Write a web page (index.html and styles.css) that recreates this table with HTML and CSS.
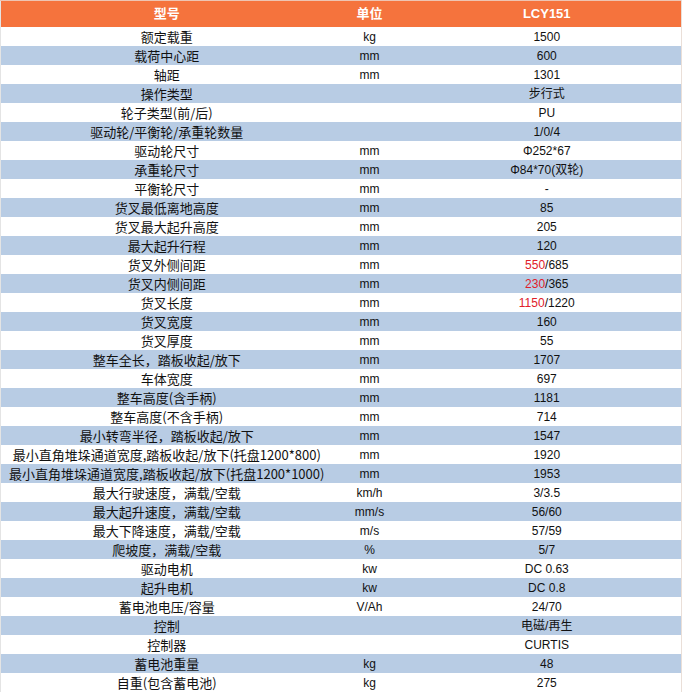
FILE: index.html
```html
<!DOCTYPE html>
<html lang="zh">
<head>
<meta charset="utf-8">
<title>LCY151</title>
<link rel="stylesheet" href="styles.css">
</head>
<body>
<table class="spec">
<colgroup><col class="c-name"><col class="c-unit"><col class="c-val"></colgroup>
<thead>
<tr class="head"><th class="name">型号</th><th class="unit">单位</th><th class="val">LCY151</th></tr>
</thead>
<tbody>
<tr><td class="name">额定载重</td><td class="unit">kg</td><td class="val">1500</td></tr>
<tr><td class="name">载荷中心距</td><td class="unit">mm</td><td class="val">600</td></tr>
<tr><td class="name">轴距</td><td class="unit">mm</td><td class="val">1301</td></tr>
<tr><td class="name">操作类型</td><td class="unit"></td><td class="val">步行式</td></tr>
<tr><td class="name">轮子类型(前/后)</td><td class="unit"></td><td class="val">PU</td></tr>
<tr><td class="name">驱动轮/平衡轮/承重轮数量</td><td class="unit"></td><td class="val">1/0/4</td></tr>
<tr><td class="name">驱动轮尺寸</td><td class="unit">mm</td><td class="val">Φ252*67</td></tr>
<tr><td class="name">承重轮尺寸</td><td class="unit">mm</td><td class="val">Φ84*70(双轮)</td></tr>
<tr><td class="name">平衡轮尺寸</td><td class="unit">mm</td><td class="val">-</td></tr>
<tr><td class="name">货叉最低离地高度</td><td class="unit">mm</td><td class="val">85</td></tr>
<tr><td class="name">货叉最大起升高度</td><td class="unit">mm</td><td class="val">205</td></tr>
<tr><td class="name">最大起升行程</td><td class="unit">mm</td><td class="val">120</td></tr>
<tr><td class="name">货叉外侧间距</td><td class="unit">mm</td><td class="val"><span class="red">550</span>/685</td></tr>
<tr><td class="name">货叉内侧间距</td><td class="unit">mm</td><td class="val"><span class="red">230</span>/365</td></tr>
<tr><td class="name">货叉长度</td><td class="unit">mm</td><td class="val"><span class="red">1150</span>/1220</td></tr>
<tr><td class="name">货叉宽度</td><td class="unit">mm</td><td class="val">160</td></tr>
<tr><td class="name">货叉厚度</td><td class="unit">mm</td><td class="val">55</td></tr>
<tr><td class="name">整车全长，踏板收起/放下</td><td class="unit">mm</td><td class="val">1707</td></tr>
<tr><td class="name">车体宽度</td><td class="unit">mm</td><td class="val">697</td></tr>
<tr><td class="name">整车高度(含手柄)</td><td class="unit">mm</td><td class="val">1181</td></tr>
<tr><td class="name">整车高度(不含手柄)</td><td class="unit">mm</td><td class="val">714</td></tr>
<tr><td class="name">最小转弯半径，踏板收起/放下</td><td class="unit">mm</td><td class="val">1547</td></tr>
<tr><td class="name">最小直角堆垛通道宽度,踏板收起/放下(托盘1200*800)</td><td class="unit">mm</td><td class="val">1920</td></tr>
<tr><td class="name">最小直角堆垛通道宽度,踏板收起/放下(托盘1200*1000)</td><td class="unit">mm</td><td class="val">1953</td></tr>
<tr><td class="name">最大行驶速度，满载/空载</td><td class="unit">km/h</td><td class="val">3/3.5</td></tr>
<tr><td class="name">最大起升速度，满载/空载</td><td class="unit">mm/s</td><td class="val">56/60</td></tr>
<tr><td class="name">最大下降速度，满载/空载</td><td class="unit">m/s</td><td class="val">57/59</td></tr>
<tr><td class="name">爬坡度，满载/空载</td><td class="unit">%</td><td class="val">5/7</td></tr>
<tr><td class="name">驱动电机</td><td class="unit">kw</td><td class="val">DC 0.63</td></tr>
<tr><td class="name">起升电机</td><td class="unit">kw</td><td class="val">DC 0.8</td></tr>
<tr><td class="name">蓄电池电压/容量</td><td class="unit">V/Ah</td><td class="val">24/70</td></tr>
<tr><td class="name">控制</td><td class="unit"></td><td class="val">电磁/再生</td></tr>
<tr><td class="name">控制器</td><td class="unit"></td><td class="val">CURTIS</td></tr>
<tr><td class="name">蓄电池重量</td><td class="unit">kg</td><td class="val">48</td></tr>
<tr><td class="name">自重(包含蓄电池)</td><td class="unit">kg</td><td class="val">275</td></tr>
</tbody>
</table>
</body>
</html>
```

FILE: styles.css
```css
html, body {
  margin: 0;
  padding: 0;
  background: #ffffff;
}

.spec {
  width: 681px;
  border-collapse: collapse;
  table-layout: fixed;
  font-family: "Liberation Sans", "Noto Sans CJK SC", sans-serif;
  font-size: 12px;
  color: #111111;
  border-top: 1px solid #eec4b2;
  border-left: 1px solid #e4e4e4;
  border-right: 1px solid #eadfd8;
}

.c-name { width: 332px; }
.c-unit { width: 74px; }
.c-val { width: 275px; }

.spec th,
.spec td {
  padding: 0;
  text-align: center;
  vertical-align: middle;
  white-space: nowrap;
  overflow: visible;
}

.head th {
  height: 26px;
  background: #f5733d;
  color: #ffffff;
  font-weight: bold;
  font-size: 13px;
  line-height: 26px;
}

.spec td {
  height: 19px;
  line-height: 18px;
}

.spec td.name {
  font-size: 13px;
  font-family: "Noto Sans CJK SC", "Liberation Sans", sans-serif;
}

.spec td.val,
.spec th.val {
  padding-left: 6px;
}

.spec td.unit {
  padding-left: 0;
}

.spec tbody tr:nth-child(even) td {
  background: #b8cce4;
}

.spec tbody tr:nth-child(odd) td {
  background: #ffffff;
}

.red {
  color: #e0202a;
}
```
